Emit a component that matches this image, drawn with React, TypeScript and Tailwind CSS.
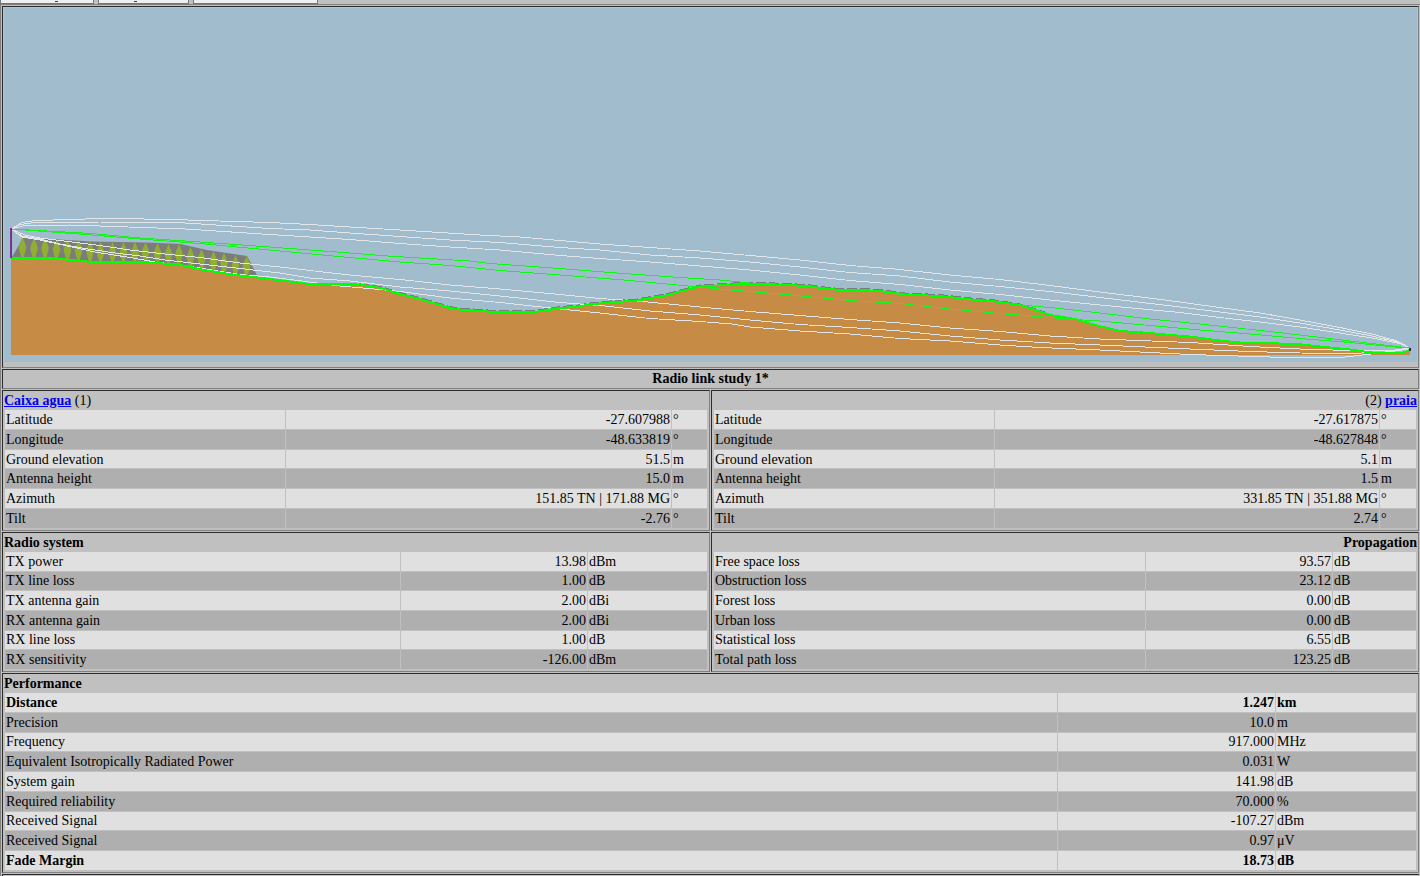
import React from "react";

type Row = { label: string; value: string; unit: string; strong?: boolean };

const siteA: Row[] = [
  { label: "Latitude", value: "-27.607988", unit: "°" },
  { label: "Longitude", value: "-48.633819", unit: "°" },
  { label: "Ground elevation", value: "51.5", unit: "m" },
  { label: "Antenna height", value: "15.0", unit: "m" },
  { label: "Azimuth", value: "151.85 TN | 171.88 MG", unit: "°" },
  { label: "Tilt", value: "-2.76", unit: "°" },
];

const siteB: Row[] = [
  { label: "Latitude", value: "-27.617875", unit: "°" },
  { label: "Longitude", value: "-48.627848", unit: "°" },
  { label: "Ground elevation", value: "5.1", unit: "m" },
  { label: "Antenna height", value: "1.5", unit: "m" },
  { label: "Azimuth", value: "331.85 TN | 351.88 MG", unit: "°" },
  { label: "Tilt", value: "2.74", unit: "°" },
];

const radio: Row[] = [
  { label: "TX power", value: "13.98", unit: "dBm" },
  { label: "TX line loss", value: "1.00", unit: "dB" },
  { label: "TX antenna gain", value: "2.00", unit: "dBi" },
  { label: "RX antenna gain", value: "2.00", unit: "dBi" },
  { label: "RX line loss", value: "1.00", unit: "dB" },
  { label: "RX sensitivity", value: "-126.00", unit: "dBm" },
];

const propagation: Row[] = [
  { label: "Free space loss", value: "93.57", unit: "dB" },
  { label: "Obstruction loss", value: "23.12", unit: "dB" },
  { label: "Forest loss", value: "0.00", unit: "dB" },
  { label: "Urban loss", value: "0.00", unit: "dB" },
  { label: "Statistical loss", value: "6.55", unit: "dB" },
  { label: "Total path loss", value: "123.25", unit: "dB" },
];

const performanceRows: Row[] = [
  { label: "Distance", value: "1.247", unit: "km", strong: true },
  { label: "Precision", value: "10.0", unit: "m" },
  { label: "Frequency", value: "917.000", unit: "MHz" },
  { label: "Equivalent Isotropically Radiated Power", value: "0.031", unit: "W" },
  { label: "System gain", value: "141.98", unit: "dB" },
  { label: "Required reliability", value: "70.000", unit: "%" },
  { label: "Received Signal", value: "-107.27", unit: "dBm" },
  { label: "Received Signal", value: "0.97", unit: "μV" },
  { label: "Fade Margin", value: "18.73", unit: "dB", strong: true },
];

const cell =
  "border border-t-[#2c2c2c] border-l-[#2c2c2c] border-r-[#808080] border-b-[#808080] p-px";

function DataTable({
  rows,
  label,
  height,
  valueCol,
  unitCol,
}: {
  rows: Row[];
  label: string;
  height: string;
  valueCol: string;
  unitCol: string;
}) {
  return (
    <table
      aria-label={label}
      className={`w-full table-fixed border-separate border-spacing-px ${height}`}
    >
      <colgroup>
        <col />
        <col className={valueCol} />
        <col className={unitCol} />
      </colgroup>
      <tbody>
        {rows.map((r, i) => (
          <tr
            key={i}
            className={`${i % 2 ? "bg-[#afafaf]" : "bg-[#e0e0e0]"} ${r.strong ? "font-bold" : ""}`}
          >
            <td className="px-px">{r.label}</td>
            <td className="px-px text-right">{r.value}</td>
            <td className="px-px">{r.unit}</td>
          </tr>
        ))}
      </tbody>
    </table>
  );
}

const terrain =
  "11,257.5 50,258 92,262 140,262 178,264.5 207,270.5 236,275 258,277.5 290,281.5 310,284 352,284 370,286 383,288.5 400,294 420,299 450,308 460,309.5 495,312 535,312 560,308 575,307 590,304.5 610,302.5 637,300.5 665,295.5 690,289 700,286.5 725,285 750,283.5 765,284 785,285 808,286 820,288 835,289.5 850,289.5 880,291 905,294.5 940,296 965,299 995,301.5 1020,305 1035,310 1050,315 1075,319 1095,325 1120,331 1150,333 1165,334.5 1195,337 1215,340 1240,342.5 1298,344 1320,346.5 1350,349.5 1375,353 1400,353.5 1410,350";

const clutterEdge =
  "320,283 352,283 370,285 383,287 400,292.5 420,297.5 450,306.5 460,308 495,310.5 535,310.5 560,306.5 575,305.5 590,303 610,301 637,299 665,294 690,287.5 700,285 725,283.5 750,282 765,282.5 785,283.5 808,284.5 820,286.5 835,288 850,288 880,289.5 905,293 940,294.5 965,297.5 995,300 1020,304 1045,312";

const fresnel = [
  "11,229 22,222.5 35,220.5 72,219.5 98,218.5 115,218.5 172,219.5 235,221.5 270,222.5 310,224.5 350,227 400,230 440,232.5 480,235 520,237 560,240.5 600,244 650,247.5 700,251 750,255.5 800,260 850,265.5 895,269 950,275 1000,279.5 1050,285.5 1100,292 1165,300 1216,307 1260,313 1300,320 1340,327.5 1372,334 1397,341 1410,348",
  "11,229 20,224.5 35,222.5 100,222 185,223 270,228.5 310,230 350,233 400,236.5 450,240 500,242.5 560,247.5 600,250 650,255 700,258 750,262 800,267 850,272.5 900,276 950,282 1000,286.5 1050,291.5 1100,297.5 1180,307 1220,312 1260,317 1300,323 1340,330 1372,336 1397,342 1410,348",
  "11,229 25,225.5 70,225 100,226 185,229 270,234.5 310,237 350,239.5 400,243.5 450,247 500,250 560,255.5 600,258.5 650,262 700,266 750,270 800,275 850,280.5 900,284.5 950,290 1000,294.5 1050,300 1100,305 1180,312.5 1220,317.5 1260,322 1300,327 1340,333 1372,338 1400,343.5 1410,348",
  "11,229 25,235 40,238 72,242 100,245.5 130,250 165,254 200,257.5 240,263 280,267 310,270.5 350,275 410,280.5 450,285 500,289 560,294.5 600,298.5 637,301 700,307 750,311.5 800,315.5 850,319.5 900,323 950,328 1000,331.5 1050,336 1100,339 1190,342.5 1250,346.5 1300,349 1350,350.5 1395,350 1410,348",
  "11,229 22,236 40,239 60,244 85,248.5 115,253 140,256 165,260 200,264 240,268.5 280,273 310,278 350,281 400,287 450,291 500,296 560,302.5 600,305.5 650,311 700,315 750,320 800,324.5 850,327.5 900,331 950,336 1000,340 1050,343 1100,345 1190,349 1250,351.5 1300,353 1350,353.5 1385,352 1410,349",
  "11,229 22,237 40,240 65,245.5 95,252 130,257.5 155,262 185,265.5 215,270.5 240,274.5 270,277 290,279.5 340,286 380,289.5 400,291.5 450,298 500,302.5 560,309 600,313 650,318.5 700,321.5 732,324 750,327 800,331 850,334 900,338.5 950,341 1000,345 1040,347.5 1100,350 1190,354.5 1270,357 1345,357 1380,353 1410,349",
];

const rays = [
  "11,229 92,233.5 140,238 200,242 270,247 310,250 350,253 388,256 420,258 470,261 490,263.5 560,268.5 610,272.5 680,277.5 720,280 750,283",
  "1020,305 1050,307.5 1100,313 1150,319 1200,324 1265,331 1300,335 1350,341 1410,348",
  "11,229 92,235 140,239 200,243.5 280,251 333,256 400,262 450,265.5 500,270.5 560,275 630,280.5 688,286 720,289 780,294 850,300.5 900,303.5 950,309 1000,313.5 1050,317.5 1075,319.5 1100,321 1150,325.5 1200,330 1250,334 1300,338.5 1350,342.5 1395,347 1410,348",
];

// x centre, top and bottom of each tree symbol
const trees: [number, number, number][] = [
  [22.5, 238, 257], [34, 239, 257], [45, 239, 257], [56.5, 240, 258], [67.5, 241, 259],
  [78.5, 241, 260], [90, 242, 261], [100.5, 243, 261], [112.5, 243, 261], [123.5, 243, 261],
  [135, 243, 261], [145.5, 243, 261], [157.5, 244, 262], [168.5, 245, 263], [179, 245, 264],
  [190.5, 248, 267], [201.5, 250, 269], [213.5, 252, 271], [224, 254, 273], [235.5, 256, 274],
  [246.5, 257, 275],
];

function Profile() {
  return (
    <svg
      role="img"
      aria-label="Terrain profile with Fresnel zones"
      viewBox="4 8 1413 354"
      preserveAspectRatio="none"
      className="block h-[354px] w-full bg-[#a1bccd]"
    >
      <polygon points={`${terrain} 1410,355 11,355`} fill="#c68c45" />
      <polygon
        points="12,257 23,238 50,239 92,241.5 145,242.5 180,244 207,250 247,256 258,277 236,275 207,270.5 178,264.5 140,262 92,262 50,258"
        fill="#7c7c7c"
      />
      {trees.map(([x, t, b]) => (
        <polygon
          key={x}
          points={`${x},${t - 1} ${x + 2.5},${t + 5} ${x + 3.8},${t + 9} ${x + 3},${t + 13} ${x + 1},${b + 1} ${x - 1},${b + 1} ${x - 3},${t + 13} ${x - 3.8},${t + 9} ${x - 2.5},${t + 5}`}
          fill="#90ae30"
        />
      ))}
      <g fill="none" shapeRendering="crispEdges">
        <polyline points={clutterEdge} stroke="#7c7c7c" strokeWidth="1" strokeDasharray="10 3" />
        {fresnel.map((p) => (
          <polyline key={p} points={p} stroke="#e2e6e8" strokeWidth="1" />
        ))}
        <polyline points={terrain} stroke="#00ff00" strokeWidth="2" />
        {rays.map((p) => (
          <polyline key={p} points={p} stroke="#14f51c" strokeWidth="1" />
        ))}
      </g>
      <rect x="10.3" y="228" width="1.5" height="30" fill="#760080" />
      <rect x="1409" y="348" width="2" height="3" fill="#4a1a5c" />
    </svg>
  );
}

const topButton =
  "flex h-6 shrink-0 items-end border-r border-b border-[#767676] bg-[#efefef] pb-px";

export default function App() {
  return (
    <div className="flex h-screen min-h-[876px] flex-col overflow-hidden bg-[#c0c0c0] font-['Liberation_Serif',serif] text-[14px] leading-[17px] text-black">
      <div className="flex h-1 shrink-0 items-end gap-1 overflow-hidden">
        <button type="button" aria-label="Study" className={`${topButton} w-[94px] border-l pl-[54px]`}>
          <span className="h-px w-[3px] bg-[#3c3c46]" />
        </button>
        <button type="button" aria-label="Summary" className={`${topButton} w-[91px] border-l pl-[35px]`}>
          <span className="h-px w-[3px] bg-[#3c3c46]" />
        </button>
        <button type="button" aria-label="Options" className={`${topButton} w-[125px] border-l`} />
      </div>

      <main className="flex flex-1 flex-col gap-px border-t border-l border-[#808080] pt-px pr-px pl-px">
        <div className={`${cell} pb-[5px]`}>
          <Profile />
        </div>

        <h1 className={`${cell} text-center leading-4 font-bold`}>Radio link study 1*</h1>

        <div className="grid grid-cols-2 gap-px">
          <section className={cell}>
            <h2>
              <a href="#site-1" className="font-bold text-[#0000ee] underline">Caixa agua</a> (1)
            </h2>
            <DataTable rows={siteA} label="Caixa agua" height="h-[120px]" valueCol="w-[385px]" unitCol="w-[35px]" />
          </section>
          <section className={cell}>
            <h2 className="text-right">
              (2) <a href="#site-2" className="font-bold text-[#0000ee] underline">praia</a>
            </h2>
            <DataTable rows={siteB} label="praia" height="h-[120px]" valueCol="w-[384px]" unitCol="w-[36px]" />
          </section>
          <section className={cell}>
            <h2 className="font-bold">Radio system</h2>
            <DataTable rows={radio} label="Radio system" height="h-[119px]" valueCol="w-[186px]" unitCol="w-[119px]" />
          </section>
          <section className={cell}>
            <h2 className="text-right font-bold">Propagation</h2>
            <DataTable rows={propagation} label="Propagation" height="h-[119px]" valueCol="w-[186px]" unitCol="w-[83px]" />
          </section>
        </div>

        <section className={cell}>
          <h2 className="font-bold">Performance</h2>
          <DataTable rows={performanceRows} label="Performance" height="h-[179px]" valueCol="w-[217px]" unitCol="w-[140px]" />
        </section>

        <div className="flex-1 border-t border-l border-[#2c2c2c]" />
      </main>
    </div>
  );
}
